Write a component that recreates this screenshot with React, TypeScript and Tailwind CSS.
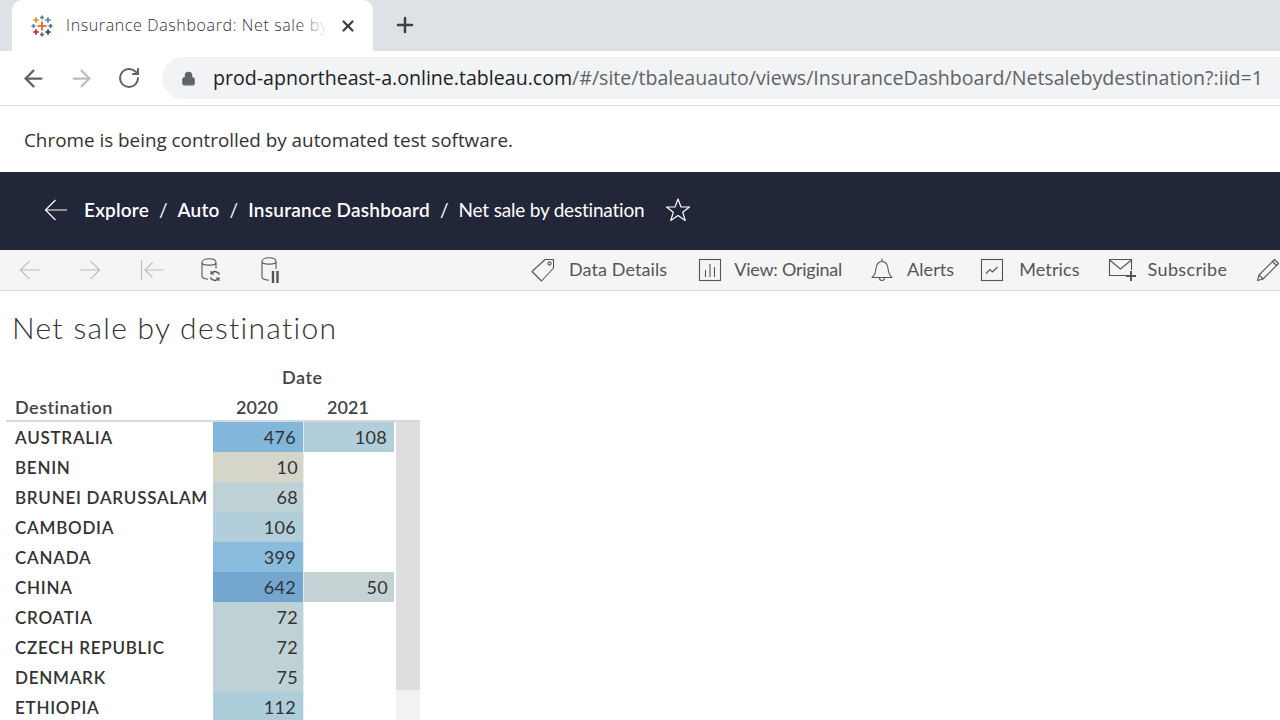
import { ArrowLeft, ArrowRight, Lock, Plus, RotateCw, X } from "lucide-react";

const rows = [
    { name: "AUSTRALIA", a: "476", ac: "bg-[#82b6da]", b: "108", bc: "bg-[#b1ceda]" },
    { name: "BENIN", a: "10", ac: "bg-[#d5d5c9]" },
    { name: "BRUNEI DARUSSALAM", a: "68", ac: "bg-[#bed1d5]" },
    { name: "CAMBODIA", a: "106", ac: "bg-[#b1ceda]" },
    { name: "CANADA", a: "399", ac: "bg-[#89bbdc]" },
    { name: "CHINA", a: "642", ac: "bg-[#73a7cf]", b: "50", bc: "bg-[#c5d2d3]" },
    { name: "CROATIA", a: "72", ac: "bg-[#bed1d5]" },
    { name: "CZECH REPUBLIC", a: "72", ac: "bg-[#bed1d5]" },
    { name: "DENMARK", a: "75", ac: "bg-[#bed1d5]" },
    { name: "ETHIOPIA", a: "112", ac: "bg-[#aecdda]" },
];

function TableauLogo() {
    const cross = (x: number, y: number, s: number, c: string) => (
        <path d={`M${x - s} ${y}H${x + s}M${x} ${y - s}V${y + s}`} stroke={c} strokeWidth={s > 3 ? 2 : 1.7} fill="none" />
    );
    return (
        <svg width="24" height="24" viewBox="0 0 24 24" className="flex-none">
            {cross(12, 12, 4.5, "#e8762d")}
            {cross(12, 3.5, 2, "#5b879b")}
            {cross(12, 20.5, 2, "#5c6692")}
            {cross(3.5, 12, 2, "#5b879b")}
            {cross(20.5, 12, 2, "#5c6692")}
            {cross(6, 6, 2.8, "#eb912b")}
            {cross(18, 6, 2.8, "#59879b")}
            {cross(6, 18, 2.8, "#c72035")}
            {cross(18, 18, 2.8, "#1f447e")}
        </svg>
    );
}

function TagIcon() {
    return (
        <svg width="26" height="26" viewBox="0 0 26 26" fill="none" stroke="#555" strokeWidth="1.1" className="flex-none">
            <path d="M15 2.500h8.500V11L11.500 24 2 14.500z" strokeLinejoin="round" />
            <circle cx="19.500" cy="6.500" r="1.600" />
        </svg>
    );
}

function ViewIcon() {
    return (
        <svg width="24" height="24" viewBox="0 0 24 24" fill="none" stroke="#555" strokeWidth="1.1" className="flex-none">
            <rect x="1.500" y="1.500" width="21" height="21" />
            <path d="M7.500 19v-7M12 19V6M16.500 19V9" />
        </svg>
    );
}

function BellIcon() {
    return (
        <svg width="24" height="26" viewBox="0 0 24 26" fill="none" stroke="#555" strokeWidth="1.1" className="flex-none">
            <path d="M2 20.500c3-2 3.500-5 4-9 .5-4 2.500-7 6-7s5.500 3 6 7c.5 4 1 7 4 9z" strokeLinejoin="round" />
            <path d="M12 1.500v3" />
            <path d="M9.500 21a2.500 2.500 0 0 0 5 0" />
        </svg>
    );
}

function MetricsIcon() {
    return (
        <svg width="24" height="24" viewBox="0 0 24 24" fill="none" stroke="#555" strokeWidth="1.1" className="flex-none">
            <rect x="1.500" y="1.500" width="21" height="21" />
            <path d="M6 15.500l4-4 2.500 2.500 5-5" />
        </svg>
    );
}

function SubscribeIcon() {
    return (
        <svg width="30" height="24" viewBox="0 0 30 24" fill="none" stroke="#555" strokeWidth="1.1" className="flex-none">
            <path d="M18 17.500H1.500v-16h22V12" />
            <path d="M1.500 2l11 9 11-9" />
            <path d="M23 13v10M18 18h10" strokeWidth="2" />
        </svg>
    );
}

function PencilIcon() {
    return (
        <svg width="24" height="24" viewBox="0 0 24 24" fill="none" stroke="#555" strokeWidth="1.1" className="ml-[29px] flex-none">
            <path d="M18.500 1.500l4 4L7 21l-5.500 1.500L3 17z" strokeLinejoin="round" />
            <path d="M16.500 3.500l4 4M3 17l4 4" />
        </svg>
    );
}

function DataRefreshIcon() {
    return (
        <svg width="24" height="26" viewBox="0 0 24 26" fill="none" stroke="#555" strokeWidth="1.1" className="ml-[36px] flex-none">
            <path d="M2 5.500c0-5 14-5 14 0v6M2 5.500c0 3.500 14 3.500 14 0M2 5.500V19c0 2 3 3 6 3.200" />
            <path d="M19.500 17.500a4.500 4.500 0 0 0-8-.8M10.500 20.500a4.500 4.500 0 0 0 8 .8" strokeWidth="1.500" />
            <path d="M11 14v3h3M19 24v-3h-3" strokeWidth="1.200" />
        </svg>
    );
}

function DataPauseIcon() {
    return (
        <svg width="24" height="28" viewBox="0 0 24 28" fill="none" stroke="#555" strokeWidth="1.1" className="ml-[36px] flex-none">
            <path d="M2 5.500c0-5 14-5 14 0v7.500M2 5.500c0 3.500 14 3.500 14 0M2 5.500V21c0 2 3 3 7 3.200" />
            <path d="M13 15v12M17.500 15v12" strokeWidth="2.400" />
        </svg>
    );
}

function BackBarIcon() {
    return (
        <svg width="24" height="22" viewBox="0 0 24 22" fill="none" stroke="#bbb" strokeWidth="1.1" className="ml-[39px] flex-none">
            <path d="M1.500 1v20M23.500 11H5M12.500 3.500L5 11l7.500 7.500" />
        </svg>
    );
}

function ThinArrow({ className, color, size }: { className?: string; color: string; size: number }) {
    return (
        <svg width={size} height={size} viewBox="0 0 24 24" fill="none" stroke={color} strokeWidth="1.200" className={`flex-none ${className ?? ""}`}>
            <path d="M23 12H1.500M11.500 2L1.500 12l10 10" />
        </svg>
    );
}

function ToolItem({ icon, label, className, labelClass }: { icon: React.ReactNode; label: string; className: string; labelClass: string }) {
    return (
        <div className={`flex flex-none items-center ${className}`}>
            {icon}
            <span className={`pb-[2px] text-[18px] text-[#555] ${labelClass}`}>{label}</span>
        </div>
    );
}

export default function App() {
    return (
        <div className="relative h-[720px] w-[1280px] overflow-hidden bg-white font-['Lato',sans-serif] text-[#333]">
            {/* Tab strip */}
            <div className="flex h-[51px] items-end bg-[#dee1e6] pl-3">
                <div className="flex h-[51px] w-[361px] items-center rounded-t-[10px] bg-white pl-[18px] pr-[15px]">
                    <TableauLogo />
                    <div className="relative ml-[12px] w-[262px] overflow-hidden whitespace-nowrap pb-[2px] font-['Open_Sans',sans-serif] text-[16px] font-light tracking-[0.62px] text-[#303336]">
                        Insurance Dashboard: Net sale by
                        <div className="absolute inset-y-0 right-0 w-[32px] bg-gradient-to-r from-white/0 to-white" />
                    </div>
                    <X className="ml-[11px] h-[18px] w-[18px] flex-none text-[#3c4043]" strokeWidth={3} />
                </div>
                <Plus className="mb-[14px] ml-[20px] h-[24px] w-[24px] text-[#3c4043]" strokeWidth={2.5} />
            </div>

            {/* Address bar */}
            <div className="flex h-[55px] items-center border-b border-[#dcdcdc] pl-[20px]">
                <ArrowLeft className="h-[27px] w-[27px] text-[#5f6368]" strokeWidth={2} />
                <ArrowRight className="ml-[21px] h-[27px] w-[27px] text-[#bcbec0]" strokeWidth={2} />
                <RotateCw className="ml-[22px] h-[24px] w-[24px] text-[#5f6368]" strokeWidth={2} />
                <div className="ml-[21px] flex h-[42px] flex-1 items-center rounded-l-[21px] bg-[#f1f3f4] pl-[19px]">
                    <Lock className="h-[15px] w-[15px] fill-[#5f6368] text-[#5f6368]" />
                    <span className="ml-[17px] whitespace-nowrap font-['Open_Sans',sans-serif] text-[19.58px] text-[#202124]">
                        prod-apnortheast-a.online.tableau.com
                        <span className="text-[#5f6368]">/#/site/tbaleauauto/views/InsuranceDashboard/Netsalebydestination?:iid=1</span>
                    </span>
                </div>
            </div>

            {/* Automation banner */}
            <div className="flex h-[66px] items-center pl-6 pt-[2px] font-['Open_Sans',sans-serif] text-[18.85px] text-[#333]">
                Chrome is being controlled by automated test software.
            </div>

            {/* Breadcrumb */}
            <div className="flex h-[78px] items-center bg-[#212639] pb-[2px] pl-[44px] text-[19px] text-white">
                <ThinArrow color="#ffffff" size={24} />
                <span className="ml-[16px] font-semibold tracking-[0.2px]">Explore</span>
                <span className="mx-[10px]">/</span>
                <span className="font-semibold tracking-[0.2px]">Auto</span>
                <span className="mx-[10px]">/</span>
                <span className="font-semibold tracking-[0.25px]">Insurance Dashboard</span>
                <span className="mx-[10px]">/</span>
                <span className="tracking-[-0.2px]">Net sale by destination</span>
                <svg width="26" height="26" viewBox="0 0 26 26" fill="none" stroke="#fff" strokeWidth="1.200" className="ml-[21px]">
                    <path d="M13 2l3 8h8.500l-6.800 5.200 2.500 8.300L13 18.500l-7.200 5 2.500-8.300L1.500 10H10z" strokeLinejoin="round" />
                </svg>
            </div>

            {/* Toolbar */}
            <div className="flex h-[41px] items-center overflow-hidden border-b border-[#d4d4d4] bg-[#f5f5f5] pl-[19px] whitespace-nowrap">
                <ThinArrow color="#bbbbbb" size={22} />
                <ThinArrow className="ml-[38px] -scale-x-100" color="#bbbbbb" size={22} />
                <BackBarIcon />
                <DataRefreshIcon />
                <DataPauseIcon />
                <ToolItem className="ml-[246px] gap-[13px]" labelClass="tracking-[0.1px]" icon={<TagIcon />} label="Data Details" />
                <ToolItem className="ml-[31px] gap-[12px]" labelClass="tracking-[-0.25px]" icon={<ViewIcon />} label="View: Original" />
                <ToolItem className="ml-[28px] gap-[13px]" labelClass="tracking-[0.1px]" icon={<BellIcon />} label="Alerts" />
                <ToolItem className="ml-[26px] gap-[15px]" labelClass="tracking-[0.1px]" icon={<MetricsIcon />} label="Metrics" />
                <ToolItem className="ml-[28px] gap-[10px]" labelClass="tracking-[0.35px]" icon={<SubscribeIcon />} label="Subscribe" />
                <PencilIcon />
            </div>

            {/* Sheet title */}
            <h1 className="pl-[12px] pt-[16px] text-[30px] font-light leading-[40px] tracking-[1.3px] text-[#333]">Net sale by destination</h1>

            {/* Crosstab */}
            <div className="mt-[14px] w-[420px] pl-[6px]">
                <div className="flex h-[30px] items-center pl-[276px] pt-[2px] text-[18px] font-semibold tracking-[0.5px] text-[#444]">Date</div>
                <div className="flex h-[31px] items-center border-b-2 border-[#d8d8d8] pr-[26px] pt-[3px] text-[18px] font-semibold text-[#444]">
                    <span className="w-[207px] pl-[9px] tracking-[0.5px]">Destination</span>
                    <span className="w-[91px] pl-[23px] tracking-[0.1px]">2020</span>
                    <span className="w-[90px] pl-[23px] tracking-[0.1px]">2021</span>
                </div>
                <div className="flex">
                    <div className="w-[389px]">
                        {rows.map((r) => (
                            <div key={r.name} className="flex h-[30px] text-[18px] tracking-[0.3px]">
                                <div className="flex w-[207px] items-center whitespace-nowrap pl-[9px] pt-[2px] text-[17px] font-semibold tracking-[0.75px] text-[#333]">
                                    {r.name}
                                </div>
                                <div className={`flex w-[91px] items-center justify-end border-r border-[#e4eff5] ${r.a.length < 3 ? "pr-[5px]" : "pr-[7px]"} ${r.ac}`}>{r.a}</div>
                                <div className={`flex w-[90px] items-center justify-end ${r.b === "50" ? "pr-[6px]" : "pr-[7px]"} ${r.bc ?? ""}`}>{r.b}</div>
                            </div>
                        ))}
                    </div>
                    <div className="ml-[1px] w-[24px] bg-[#f3f3f3]">
                        <div className="h-[268px] bg-[#dedede]" />
                    </div>
                </div>
            </div>
        </div>
    );
}
